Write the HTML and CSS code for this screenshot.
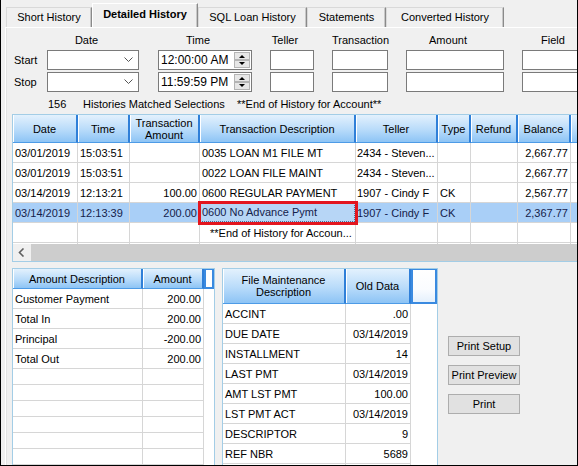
FILE: index.html
```html
<!DOCTYPE html>
<html lang="en">
<head>
    <meta charset="UTF-8">
    <title>Detailed History</title>
    <link rel="stylesheet" href="styles.css">
</head>
<body>
    <div class="window">
        <div class="tabs">
            <div class="tab tab-short">Short History</div>
            <div class="tab tab-detail active">Detailed History</div>
            <div class="tab tab-sql">SQL Loan History</div>
            <div class="tab tab-stmt">Statements</div>
            <div class="tab tab-conv">Converted History</div>
        </div>

        <div class="panel">
            <div class="filters">
                <span></span>
                <div class="col-head">Date</div>
                <div class="col-head">Time</div>
                <div class="col-head">Teller</div>
                <div class="col-head">Transaction</div>
                <div class="col-head">Amount</div>
                <div class="col-head">Field</div>

                <div class="row-label">Start</div>
                <div class="combo">
                    <svg class="chevron" width="9" height="6" viewBox="0 0 9 6"><polyline points="0.5,0.5 4.5,4.5 8.5,0.5" fill="none" stroke="#555" stroke-width="1"/></svg>
                </div>
                <div class="timebox">
                    <span>12:00:00 AM</span>
                    <svg class="spin" width="16" height="16" viewBox="0 0 16 16">
                        <rect x="0.5" y="0.5" width="15" height="7" fill="#e6e6e6" stroke="#b4b4b4"/>
                        <rect x="0.5" y="8.5" width="15" height="7" fill="#e6e6e6" stroke="#b4b4b4"/>
                        <polygon points="5,6 11,6 8,3" fill="#000"/>
                        <polygon points="5,10 11,10 8,13" fill="#000"/>
                    </svg>
                </div>
                <div class="box"></div>
                <div class="box"></div>
                <div class="box"></div>
                <div class="box"></div>

                <div class="row-label">Stop</div>
                <div class="combo">
                    <svg class="chevron" width="9" height="6" viewBox="0 0 9 6"><polyline points="0.5,0.5 4.5,4.5 8.5,0.5" fill="none" stroke="#555" stroke-width="1"/></svg>
                </div>
                <div class="timebox">
                    <span>11:59:59 PM</span>
                    <svg class="spin" width="16" height="16" viewBox="0 0 16 16">
                        <rect x="0.5" y="0.5" width="15" height="7" fill="#e6e6e6" stroke="#b4b4b4"/>
                        <rect x="0.5" y="8.5" width="15" height="7" fill="#e6e6e6" stroke="#b4b4b4"/>
                        <polygon points="5,6 11,6 8,3" fill="#000"/>
                        <polygon points="5,10 11,10 8,13" fill="#000"/>
                    </svg>
                </div>
                <div class="box"></div>
                <div class="box"></div>
                <div class="box"></div>
                <div class="box"></div>
            </div>

            <div class="status">
                <span class="count">156</span>
                <span class="matched">Histories Matched Selections</span>
                <span>**End of History for Account**</span>
            </div>

            <div class="grid main-grid">
                <div class="grid-body">
                    <table>
                        <colgroup>
                            <col class="c-date"><col class="c-time"><col class="c-amt"><col class="c-desc">
                            <col class="c-teller"><col class="c-type"><col class="c-refund"><col class="c-bal"><col class="c-extra">
                        </colgroup>
                        <tr class="head-row tall">
                            <th>Date</th>
                            <th>Time</th>
                            <th>Transaction<br>Amount</th>
                            <th>Transaction Description</th>
                            <th>Teller</th>
                            <th>Type</th>
                            <th>Refund</th>
                            <th>Balance</th>
                            <th></th>
                        </tr>
                        <tr>
                            <td>03/01/2019</td><td>15:03:51</td><td class="num"></td><td>0035 LOAN M1 FILE MT</td>
                            <td class="teller">2434 - Steven...</td><td></td><td></td><td class="num">2,667.77</td><td></td>
                        </tr>
                        <tr>
                            <td>03/01/2019</td><td>15:03:51</td><td class="num"></td><td>0022 LOAN FILE MAINT</td>
                            <td class="teller">2434 - Steven...</td><td></td><td></td><td class="num">2,667.77</td><td></td>
                        </tr>
                        <tr>
                            <td>03/14/2019</td><td>12:13:21</td><td class="num">100.00</td><td>0600 REGULAR PAYMENT</td>
                            <td class="teller">1907 - Cindy F</td><td>CK</td><td></td><td class="num">2,567.77</td><td></td>
                        </tr>
                        <tr class="selected">
                            <td>03/14/2019</td><td>12:13:39</td><td class="num">200.00</td><td class="focus"><span class="focus-rect">0600 No Advance Pymt</span></td>
                            <td class="teller">1907 - Cindy F</td><td>CK</td><td></td><td class="num">2,367.77</td><td></td>
                        </tr>
                        <tr>
                            <td></td><td></td><td></td><td class="end-note">**End of History for Accoun...</td>
                            <td></td><td></td><td></td><td></td><td></td>
                        </tr>
                        <tr>
                            <td></td><td></td><td></td><td></td><td></td><td></td><td></td><td></td><td></td>
                        </tr>
                    </table>
                </div>
                <div class="hscroll">
                    <span class="scroll-arrow">
                        <svg width="7" height="9" viewBox="0 0 7 9"><polyline points="5.5,0.5 1.5,4.5 5.5,8.5" fill="none" stroke="#606060" stroke-width="1.6"/></svg>
                    </span>
                    <span class="scroll-thumb"></span>
                </div>
            </div>

            <div class="lower">
                <div class="grid amount-grid">
                    <table>
                        <colgroup><col class="c-adesc"><col class="c-aamt"><col class="c-fill"></colgroup>
                        <tr class="head-row">
                            <th>Amount Description</th>
                            <th>Amount</th>
                            <th class="fill-head"></th>
                        </tr>
                        <tr><td>Customer Payment</td><td class="num">200.00</td><td class="fill"></td></tr>
                        <tr><td>Total In</td><td class="num">200.00</td><td class="fill"></td></tr>
                        <tr><td>Principal</td><td class="num">-200.00</td><td class="fill"></td></tr>
                        <tr><td>Total Out</td><td class="num">200.00</td><td class="fill"></td></tr>
                        <tr class="blank"><td></td><td></td><td class="fill"></td></tr>
                        <tr class="blank"><td></td><td></td><td class="fill"></td></tr>
                        <tr class="blank"><td></td><td></td><td class="fill"></td></tr>
                        <tr class="blank"><td></td><td></td><td class="fill"></td></tr>
                        <tr class="blank"><td></td><td></td><td class="fill"></td></tr>
                        <tr class="blank"><td></td><td></td><td class="fill"></td></tr>
                        <tr class="blank"><td></td><td></td><td class="fill"></td></tr>
                    </table>
                </div>

                <div class="grid fm-grid">
                    <table>
                        <colgroup><col class="c-fdesc"><col class="c-fold"><col class="c-ffill"></colgroup>
                        <tr class="head-row fm-head">
                            <th>File Maintenance<br>Description</th>
                            <th>Old Data</th>
                            <th class="fill-head soft"></th>
                        </tr>
                        <tr><td>ACCINT</td><td class="num">.00</td><td class="fill"></td></tr>
                        <tr><td>DUE DATE</td><td class="num">03/14/2019</td><td class="fill"></td></tr>
                        <tr><td>INSTALLMENT</td><td class="num">14</td><td class="fill"></td></tr>
                        <tr><td>LAST PMT</td><td class="num">03/14/2019</td><td class="fill"></td></tr>
                        <tr><td>AMT LST PMT</td><td class="num">100.00</td><td class="fill"></td></tr>
                        <tr><td>LST PMT ACT</td><td class="num">03/14/2019</td><td class="fill"></td></tr>
                        <tr><td>DESCRIPTOR</td><td class="num">9</td><td class="fill"></td></tr>
                        <tr><td>REF NBR</td><td class="num">5689</td><td class="fill"></td></tr>
                        <tr><td></td><td></td><td class="fill"></td></tr>
                    </table>
                </div>

                <div class="print-buttons">
                    <button class="btn">Print Setup</button>
                    <button class="btn">Print Preview</button>
                    <button class="btn">Print</button>
                </div>
            </div>
        </div>
    </div>
</body>
</html>
```

FILE: styles.css
```css
* {
    margin: 0;
    padding: 0;
    box-sizing: border-box;
}

body {
    font-family: "Liberation Sans", Arial, sans-serif;
    font-size: 11px;
    color: #000;
    background: #f0f0f0;
}

.window {
    width: 578px;
    height: 466px;
    background: #f0f0f0;
    border: 1px solid #000;
    border-top: none;
    overflow: hidden;
    display: flex;
    flex-direction: column;
}

/* tab strip */
.tabs {
    display: flex;
    align-items: flex-end;
    height: 27px;
    padding-left: 5px;
    flex-shrink: 0;
}

.tab {
    height: 20px;
    line-height: 18px;
    text-align: center;
    background: #f0f0f0;
    border-top: 1px solid #d9d9d9;
    border-left: 1px solid #d9d9d9;
    border-right: 1px solid #8a8a8a;
    box-shadow: inset -1px 0 #c8c8c8;
}

.tab.active {
    height: 24px;
    line-height: 20px;
    font-weight: bold;
    border-top-color: #fff;
    border-left-color: #fff;
}

.tab-short { width: 86px; }
.tab-detail { width: 106px; }
.tab-sql { width: 109px; }
.tab-stmt { width: 79px; }
.tab-conv { width: 118px; }

.panel {
    flex: 1;
    margin-left: 4px;
    padding-left: 6px;
    border-top: 1px solid #fff;
    border-left: 1px solid #fff;
    box-shadow: inset 1px 0 #e3e3e3;
    min-height: 0;
}

/* filter boxes */
.filters {
    display: grid;
    grid-template-columns: 15px 93px 94px 44px 56px 98px 76px;
    grid-template-rows: 14px 20px 20px;
    column-gap: 18px;
    row-gap: 2px;
    margin: 6px 0 0 2px;
}

.col-head {
    text-align: center;
    padding-right: 14px;
    line-height: 12px;
    white-space: nowrap;
}

.row-label {
    line-height: 20px;
    white-space: nowrap;
}

.box,
.combo,
.timebox {
    background: #fff;
    border: 1px solid #7a7a7a;
    height: 20px;
}

.combo {
    width: 92px;
    display: flex;
    align-items: center;
    justify-content: flex-end;
    padding-right: 5px;
}

.timebox {
    display: flex;
    align-items: center;
    justify-content: space-between;
    padding: 0 1px 0 2px;
    font-size: 12px;
}

.spin {
    display: block;
}

/* status line */
.status {
    display: flex;
    height: 14px;
    line-height: 14px;
    margin-top: 5px;
    padding-left: 36px;
    white-space: nowrap;
}

.status .count { width: 35px; }
.status .matched { width: 154px; }

/* data grids */
.grid {
    background: #fff;
    border: 1px solid #a3cde6;
    overflow: hidden;
}

.grid table {
    border-collapse: separate;
    border-spacing: 0;
    table-layout: fixed;
}

.grid th,
.grid td {
    border-right: 1px solid #d6d6d6;
    border-bottom: 1px solid #d6d6d6;
    padding: 0 2px;
    white-space: nowrap;
    overflow: hidden;
    text-overflow: ellipsis;
    text-align: left;
    font-weight: normal;
}

.grid tr { height: 20px; }

.grid .head-row th {
    text-align: center;
    line-height: 12px;
    background: linear-gradient(#e3f1fd, #b8dbfa 55%, #8dc4f5);
    border-right: 2px solid #2f7fd8;
    border-bottom: 1px solid #4d9be6;
    box-shadow: inset 1px 0 #fff;
}

.grid .num { text-align: right; }

.grid td.teller {
    padding: 0 0 0 1px;
    text-overflow: clip;
}

.grid .selected td {
    background: #a9cff7;
    color: #14214a;
}

.grid td.focus {
    padding: 0;
    outline: 3px solid #e3161f;
    outline-offset: -1px;
}

.focus-rect {
    display: block;
    height: 19px;
    line-height: 17px;
    padding: 0 1px;
    border: 1px dotted #4b6f98;
    background: #b7d6f6;
}

.grid td.end-note { padding-left: 10px; }

/* main history grid */
.main-grid {
    width: 580px;
    height: 148px;
    margin-top: 3px;
    display: flex;
    flex-direction: column;
}

.grid-body {
    flex: 1;
    overflow: hidden;
}

.main-grid table { width: 588px; }
.main-grid .tall { height: 28px; }

.c-date { width: 65px; }
.c-time { width: 52px; }
.c-amt { width: 70px; }
.c-desc { width: 156px; }
.c-teller { width: 82px; }
.c-type { width: 33px; }
.c-refund { width: 47px; }
.c-bal { width: 53px; }
.c-extra { width: 30px; }

.hscroll {
    display: flex;
    height: 17px;
    background: #f0f0f0;
    flex-shrink: 0;
}

.scroll-arrow {
    width: 17px;
    display: flex;
    align-items: center;
    justify-content: center;
}

.scroll-thumb {
    flex: 1;
    background: #cdcdcd;
    margin: 0 0 0 1px;
}

/* lower area */
.lower {
    display: flex;
    align-items: flex-start;
    margin-top: 6px;
}

.amount-grid {
    width: 203px;
    height: 200px;
}

.amount-grid table { width: 201px; }

.c-adesc { width: 130px; }
.c-aamt { width: 61px; }
.c-fill { width: 10px; }

.amount-grid .blank { height: 16px; }

.fm-grid {
    width: 216px;
    height: 200px;
    margin-left: 7px;
}

.fm-grid table { width: 214px; }

.c-fdesc { width: 123px; }
.c-fold { width: 65px; }
.c-ffill { width: 26px; }

.fm-grid .fm-head { height: 35px; }

.grid td.fill {
    border: none;
}

.grid .head-row th.fill-head {
    background: #fff;
    border: 2px solid #3a8ae0;
    border-top-width: 1px;
    box-shadow: none;
}

.grid .head-row th.fill-head.soft {
    background: linear-gradient(#fff, #fafcff 60%, #e4f0fc);
}

.print-buttons {
    display: flex;
    flex-direction: column;
    gap: 9px;
    margin: 68px 0 0 10px;
}

.btn {
    width: 72px;
    height: 20px;
    font-family: "Liberation Sans", Arial, sans-serif;
    font-size: 11px;
    color: #000;
    background: #e1e1e1;
    border: 1px solid #adadad;
}
```
